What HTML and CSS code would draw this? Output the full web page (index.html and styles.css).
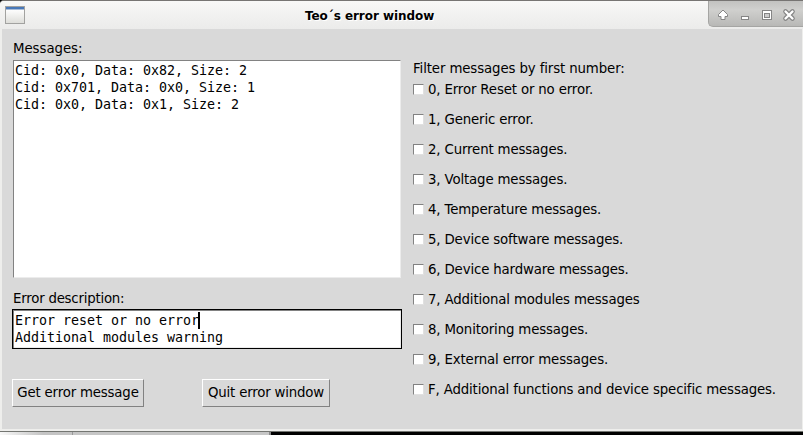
FILE: index.html
```html
<!DOCTYPE html>
<html lang="en">
<head>
<meta charset="utf-8">
<title>Teo´s error window</title>
<link rel="stylesheet" href="styles.css">
</head>
<body>
<div class="window">
  <header class="titlebar">
    <span class="app-icon"></span>
    <h1 class="title">Teo´s error window</h1>
    <div class="controls">
      <svg width="94" height="26" viewBox="1 0 94 26" shape-rendering="crispEdges">
        <g shape-rendering="auto">
          <path d="M15 9 L19.500 13.500 V15.500 H17 V18.500 H13 V15.500 H10.500 V13.500 Z" fill="#fff" stroke="#858585" stroke-linejoin="round"/>
          <path d="M77.500 10.500 L84.500 17.500 M84.500 10.500 L77.500 17.500" stroke="#858585" stroke-width="4.600" stroke-linecap="round"/>
          <path d="M77.500 10.500 L84.500 17.500 M84.500 10.500 L77.500 17.500" stroke="#fff" stroke-width="2.300" stroke-linecap="round"/>
        </g>
        <path d="M33.500 15.500h7v3h-7z" fill="#fff" stroke="#858585"/>
        <path d="M54.500 9.500h9v9h-9z" fill="#fff" stroke="#858585"/>
        <path d="M56.500 12.500h5v4h-5z" fill="#ccc" stroke="#858585"/>
      </svg>
    </div>
  </header>
  <main class="content">
    <section class="left">
      <div class="label messages-label">Messages:</div>
      <div class="messages"><p>Cid: 0x0, Data: 0x82, Size: 2</p><p>Cid: 0x701, Data: 0x0, Size: 1</p><p>Cid: 0x0, Data: 0x1, Size: 2</p></div>
      <div class="label desc-label">Error description:</div>
      <div class="description"><p>Error reset or no error<span class="caret"></span></p><p>Additional modules warning</p></div>
      <div class="buttons">
        <button class="get">Get error message</button>
        <button class="quit">Quit error window</button>
      </div>
    </section>
    <section class="filters">
      <div class="label">Filter messages by first number:</div>
      <div class="filter"><i class="box"></i>0, Error Reset or no error.</div>
      <div class="filter"><i class="box"></i>1, Generic error.</div>
      <div class="filter"><i class="box"></i>2, Current messages.</div>
      <div class="filter"><i class="box"></i>3, Voltage messages.</div>
      <div class="filter"><i class="box"></i>4, Temperature messages.</div>
      <div class="filter"><i class="box"></i>5, Device software messages.</div>
      <div class="filter"><i class="box"></i>6, Device hardware messages.</div>
      <div class="filter"><i class="box"></i>7, Additional modules messages</div>
      <div class="filter"><i class="box"></i>8, Monitoring messages.</div>
      <div class="filter"><i class="box"></i>9, External error messages.</div>
      <div class="filter"><i class="box"></i>F, Additional functions and device specific messages.</div>
    </section>
  </main>
</div>
<div class="desktop"><span class="panel"></span><span class="panel second"></span></div>
</body>
</html>
```
FILE: styles.css
```css
* { box-sizing: border-box; }
html, body { margin: 0; height: 435px; overflow: hidden; }
body {
  background: #000;
  color: #000;
  font: 13.33px/16px "DejaVu Sans", sans-serif;
  letter-spacing: -0.15px;
  font-variant-ligatures: none;
}
p { margin: 0; height: 17px; white-space: pre; }
.window {
  height: 432px;
  background: #eeeeec;
  border-top: 1px solid #777573;
  border-bottom: 1px solid #747672;
  border-radius: 4px 0 0 0;
}
.titlebar {
  height: 28px;
  display: flex;
  align-items: flex-start;
  background: linear-gradient(#f8f8f7, #ebebea);
  border-radius: 4px 0 0 0;
}
.app-icon {
  width: 20px;
  height: 18px;
  margin: 5px 0 0 5px;
  border: 1px solid #a2a2a0;
  background: linear-gradient(#4878b8 0 2px, #a8bcd8 2px 3px, #fdfdfd 3px, #dededa);
}
.title {
  flex: 1;
  margin: 7px 0 0 280px;
  font: bold 12px/16px "DejaVu Sans", sans-serif;
  letter-spacing: -0.06px;
  text-shadow: 1px 1px #fff;
  white-space: nowrap;
}
.controls {
  width: 95px;
  height: 26px;
  background: linear-gradient(#c2c2c0, #d0d0ce 35%, #b8b8b6);
  border-left: 1px solid #a5a5a3;
  border-bottom: 1px solid #a5a5a3;
  border-radius: 0 0 0 5px;
}
.controls svg { display: block; }
.content {
  height: 400px;
  margin: 0 1px 0 2px;
  background: #d9d9d9;
  display: flex;
}
.left { width: 400px; padding: 12px 0 0 10px; }
.label { height: 16px; padding-left: 1px; white-space: nowrap; }
.messages, .description {
  font: 13.33px/17px "DejaVu Sans Mono", monospace;
  letter-spacing: -0.025px;
  background: #fff;
}
.messages {
  width: 388px;
  height: 218px;
  margin: 3px 0 0 1px;
  padding: 1px;
  border: 1px solid;
  border-color: #828282 #ececec #ececec #828282;
}
.messages-label { letter-spacing: -0.05px; }
.desc-label { margin-top: 13px; letter-spacing: -0.22px; }
.description {
  width: 390px;
  height: 40px;
  margin-top: 2px;
  padding: 2px;
  border: 1px solid #000;
  box-shadow: inset 1px 1px #828282, inset -1px -1px #ececec;
}
.caret {
  display: inline-block;
  width: 2px;
  height: 17px;
  margin-left: -1px;
  vertical-align: top;
  background: #000;
}
.buttons { display: flex; gap: 58px; margin-top: 30px; }
button {
  height: 28px;
  padding: 0;
  background: #d9d9d9;
  border: 1px solid;
  border-color: #fff #828282 #828282 #fff;
  color: #000;
  font: inherit;
  letter-spacing: -0.18px;
  white-space: nowrap;
}
.get { width: 132px; }
.quit { width: 128px; }
.filters { padding: 32px 0 0 10px; }
.filter {
  height: 16px;
  margin-bottom: 14px;
  display: flex;
  align-items: flex-start;
  white-space: nowrap;
}
.filters .label { margin-bottom: 5px; letter-spacing: -0.12px; }
.box {
  width: 11px;
  height: 11px;
  margin: 2px 4px 0 1px;
  background: #fff;
  border: 1px solid;
  border-color: #828282 #e0e0e0 #e0e0e0 #828282;
}
.desktop { height: 3px; display: flex; background: #000; }
.panel { width: 73px; background: linear-gradient(90deg, #f8f8f8, #c4c4c4 60%); border-right: 1px solid #999; }
.second { width: 198px; background: #c6c6c6; border-right: 2px solid #888; }
```
